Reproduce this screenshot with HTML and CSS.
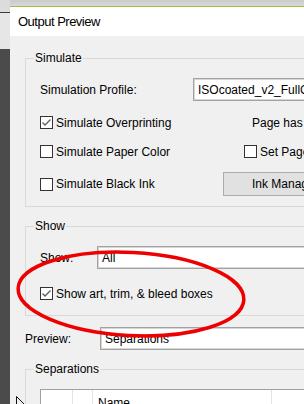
FILE: index.html
```html
<!DOCTYPE html>
<html>
<head>
<meta charset="utf-8">
<link rel="stylesheet" href="styles.css">
</head>
<body>
<div class="side">
  <div class="side-a"></div>
  <div class="side-line"></div>
  <div class="side-b"></div>
  <div class="side-c"></div>
</div>
<div class="main">
  <div class="topstrip"></div>
  <div class="dialog">
    <div class="titlebar">Output Preview</div>
    <div class="content">
      <div class="group g-sim">
        <div class="gtitle"><span>Simulate</span></div>
        <div class="row r-profile">
          <div class="cell w-profile">Simulation Profile:</div>
          <div class="select">ISOcoated_v2_FullGamut (ECI)</div>
        </div>
        <div class="row r-over">
          <div class="cell w-over"><span class="cb checked"><svg width="11" height="11" viewBox="0 0 11 11"><path d="M1.5 5.5 L4 8 L9.5 2.5" fill="none" stroke="#5c5c5c" stroke-width="1.3"/></svg></span>Simulate Overprinting</div>
          <div class="cell">Page has Overprint: No</div>
        </div>
        <div class="row r-paper">
          <div class="cell w-paper"><span class="cb"></span>Simulate Paper Color</div>
          <div class="cell"><span class="cb"></span>Set Page Background Color</div>
        </div>
        <div class="row r-black">
          <div class="cell w-black"><span class="cb"></span>Simulate Black Ink</div>
          <div class="btn">Ink Manager...</div>
        </div>
      </div>

      <div class="group g-show">
        <div class="gtitle"><span>Show</span></div>
        <div class="row r-showsel">
          <div class="cell w-show">Show:</div>
          <div class="select">All</div>
        </div>
        <div class="row r-boxes">
          <div class="cell"><span class="cb checked"><svg width="11" height="11" viewBox="0 0 11 11"><path d="M1.5 5.5 L4 8 L9.5 2.5" fill="none" stroke="#5c5c5c" stroke-width="1.3"/></svg></span>Show art, trim, &amp; bleed boxes</div>
        </div>
      </div>

      <div class="row r-preview">
        <div class="cell w-preview">Preview:</div>
        <div class="select">Separations</div>
      </div>

      <div class="group g-sep">
        <div class="gtitle"><span>Separations</span></div>
        <div class="table">
          <div class="th th1"></div>
          <div class="th th2"></div>
          <div class="th th3">Name</div>
          <div class="th th4"></div>
        </div>
      </div>
    </div>
  </div>
</div>
<svg class="overlay" width="304" height="404" viewBox="0 0 304 404">
  <ellipse cx="131" cy="294" rx="113" ry="41.5" transform="rotate(3 131 294)" fill="none" stroke="#ee0000" stroke-width="3.5"/>
  <path d="M16.5 396.5 V406 M16.5 396.5 L24 404" fill="none" stroke="#111" stroke-width="1"/>
</svg>
</body>
</html>
```
FILE: styles.css
```css
html, body {
  margin: 0;
  padding: 0;
}
body {
  width: 304px;
  height: 404px;
  overflow: hidden;
  display: flex;
  position: relative;
  font-family: "Liberation Sans", Arial, sans-serif;
  font-size: 12px;
  color: #000;
}
.side {
  width: 10px;
  flex: none;
  display: flex;
  flex-direction: column;
}
.side-a { height: 12px; flex: none; background: #dcdcdc; }
.side-line { height: 1px; flex: none; background: #3c3c3c; }
.side-b { height: 36px; flex: none; background: #e6e6e6; }
.side-c { flex: 1; background: #4b4b4b; }

.main {
  flex: 1;
  min-width: 0;
  height: 404px;
  overflow: hidden;
  display: flex;
  flex-direction: column;
}
.topstrip {
  flex: none;
  height: 6px;
  background: linear-gradient(#cbcbcb, #d8d8d8);
}
.dialog {
  flex: 1 0 auto;
  width: 420px;
  border-top: 1px solid #9ac13c;
  background: #f0f0f0;
}
.titlebar {
  height: 29px;
  background: #fff;
  padding-left: 8px;
  display: flex;
  align-items: center;
  font-size: 13px;
  letter-spacing: -0.5px;
}
.content {
  padding-left: 15px;
}
.group {
  width: 400px;
  border: 1px solid #d9d9d9;
  padding-left: 14px;
}
.gtitle {
  height: 15px;
  line-height: 15px;
  margin-top: -8px;
  margin-left: -6px;
}
.gtitle span {
  background: #f0f0f0;
  padding: 0 1px;
}
.g-sim { margin-top: 22px; padding-bottom: 10px; }
.g-show { margin-top: 19px; padding-bottom: 9px; }
.g-sep { margin-top: 19px; height: 60px; }

.row {
  display: flex;
  align-items: center;
  white-space: nowrap;
}
.cell {
  display: flex;
  align-items: center;
  flex: none;
}
.r-profile { height: 23px; margin-top: 12px; }
.r-over { height: 25px; margin-top: 9px; }
.r-paper { height: 25px; margin-top: 4px; }
.r-black { height: 24px; margin-top: 8px; }
.r-showsel { height: 23px; margin-top: 12px; }
.r-boxes { height: 25px; margin-top: 12px; }
.r-preview { height: 23px; margin-top: 11px; }

.w-profile { width: 153px; }
.w-over { width: 212px; }
.w-paper { width: 204px; }
.w-black { width: 183px; }
.w-show { width: 57px; }
.w-preview { width: 75px; }

.cb {
  width: 13px;
  height: 13px;
  box-sizing: border-box;
  border: 1px solid #333;
  background: #fff;
  margin-right: 3px;
  display: flex;
  align-items: center;
  justify-content: center;
  flex: none;
}
.select {
  height: 23px;
  width: 220px;
  box-sizing: border-box;
  border: 1px solid #a2a2a2;
  box-shadow: inset 0 0 0 1px #d6d6d6;
  background: #fff;
  padding-left: 4px;
  display: flex;
  align-items: center;
  white-space: nowrap;
  overflow: hidden;
}
.btn {
  height: 24px;
  width: 130px;
  box-sizing: border-box;
  border: 1px solid #adadad;
  background: #e1e1e1;
  padding-left: 28px;
  display: flex;
  align-items: center;
  white-space: nowrap;
}
.table {
  margin-top: 12px;
  display: flex;
  background: #fff;
  border-top: 1px solid #a0a0a0;
  border-left: 1px solid #a0a0a0;
  height: 40px;
}
.th {
  height: 26px;
  border-right: 1px solid #e3e3e3;
  border-bottom: 1px solid #e3e3e3;
  display: flex;
  align-items: center;
  box-sizing: border-box;
  flex: none;
}
.th1 { width: 32px; }
.th2 { width: 20px; }
.th3 { width: 179px; padding-left: 5px; }
.th4 { width: 80px; border-right: none; }
.overlay {
  position: absolute;
  left: 0;
  top: 0;
  pointer-events: none;
}
```
